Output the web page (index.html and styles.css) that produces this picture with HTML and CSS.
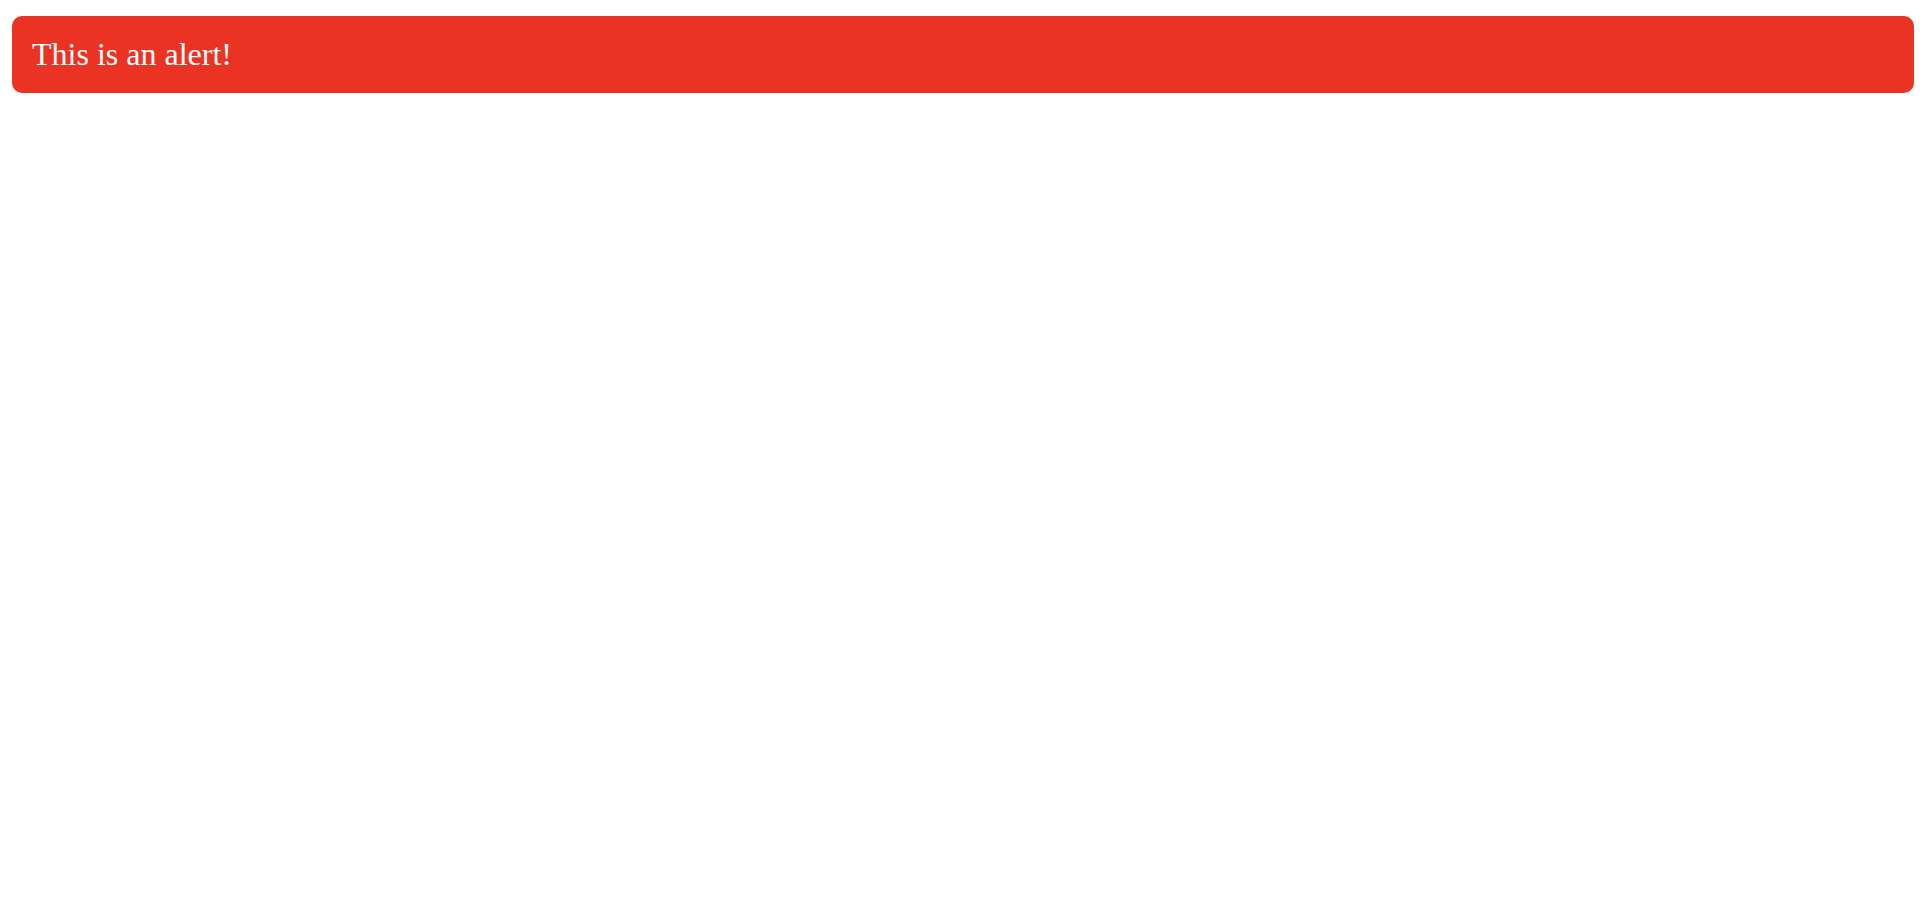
FILE: index.html
```html
<!DOCTYPE html>
<html lang="en">
<head>
  <meta charset="UTF-8">
  <meta name="viewport" content="width=device-width, initial-scale=1.0">
  <title>Alert</title>
  <link rel="stylesheet" href="styles.css">
</head>
<body>
  <div class="alert" role="alert">This is an alert!</div>
</body>
</html>
```

FILE: styles.css
```css
body {
  margin: 16px 12px;
  background: #fff;
  font-family: "Liberation Serif", "Times New Roman", serif;
  font-size: 32px;
}

.alert {
  padding: 20px;
  border-radius: 10px;
  background-color: #eb3323;
  color: #fff;
  line-height: 37px;
}
```
